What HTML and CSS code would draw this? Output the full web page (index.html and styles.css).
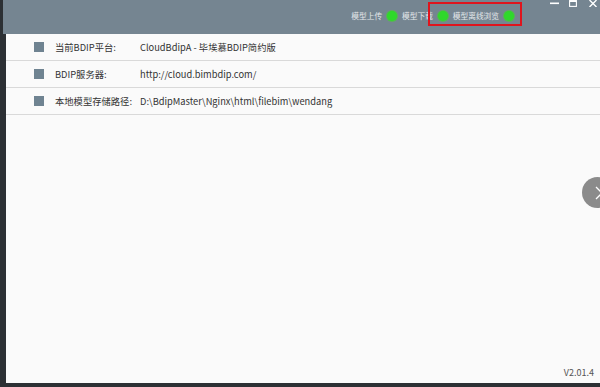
FILE: index.html
```html
<!DOCTYPE html>
<html lang="zh">
<head>
<meta charset="utf-8">
<link rel="stylesheet" href="styles.css">
</head>
<body>
<div class="app">
  <div class="strip"></div>
  <div class="main">
    <header class="topbar">
      <div class="status">
        <span class="item">模型上传<i class="dot"></i></span>
        <span class="item">模型下载<i class="dot"></i></span>
        <span class="item">模型离线浏览<i class="dot"></i></span>
        <span class="mark"></span>
      </div>
      <div class="controls">
        <svg class="min" width="9" height="7" viewBox="0 0 9 7"><rect x="0" y="2.5" width="9" height="1.6" fill="#fff"/></svg>
        <svg class="max" width="8" height="7" viewBox="0 0 8 7"><rect x="0.6" y="0.6" width="6.8" height="5.8" fill="none" stroke="#fff" stroke-width="1.1"/><rect x="0.6" y="0.6" width="6.8" height="1.4" fill="#fff"/></svg>
        <svg class="close" width="8" height="7" viewBox="0 0 8 7"><path d="M0.5 0L7.5 7M7.5 0L0.5 7" stroke="#fff" stroke-width="1.4"/></svg>
      </div>
    </header>
    <section class="content">
      <div class="row"><span class="sq"></span><span class="label">当前BDIP平台:</span><span class="value">CloudBdipA - 毕埃慕BDIP简约版</span></div>
      <div class="row"><span class="sq"></span><span class="label">BDIP服务器:</span><span class="value">http://cloud.bimbdip.com/</span></div>
      <div class="row"><span class="sq"></span><span class="label">本地模型存储路径:</span><span class="value">D:\BdipMaster\Nginx\html\filebim\wendang</span></div>
      <div class="next"><svg width="8" height="14" viewBox="0 0 8 14"><path d="M1 1L7 7L1 13" fill="none" stroke="#fff" stroke-width="1.3"/></svg></div>
      <div class="version">V2.01.4</div>
    </section>
    <div class="bottom"></div>
  </div>
</div>
</body>
</html>
```
FILE: styles.css
```css
* { box-sizing: border-box; margin: 0; padding: 0; }
html, body { width: 600px; height: 387px; overflow: hidden; }
body {
  font-family: "Noto Sans CJK SC", "Noto Sans", sans-serif;
  background: #2c3034;
}
.app { display: flex; width: 600px; height: 387px; }
.strip { width: 6px; background: #2c3034; }
.main { flex: 1; display: flex; flex-direction: column; }
.topbar {
  height: 34px;
  background: #758591;
  margin-left: -3px;
  display: flex;
  justify-content: flex-end;
  position: relative;
}
.status {
  display: flex;
  align-items: center;
  height: 31px;
  gap: 5px;
  margin-right: 86px;
  position: relative;
}
.item {
  display: flex;
  align-items: center;
  font-size: 7.7px;
  color: #e3e7ea;
  gap: 5px;
}
.dot {
  width: 10px; height: 10px;
  border-radius: 50%;
  background: #2fd82b;
  box-shadow: 0 0 0 1px #58b455;
}
.mark {
  position: absolute;
  left: 77px; top: 2px;
  width: 94px; height: 24px;
  border: 2px solid #e0141d;
}
.controls {
  position: absolute;
  left: 547px; top: 0;
  display: flex;
  align-items: flex-start;
}
.max { margin-left: 10px; }
.close { margin-left: 12px; }
.content {
  flex: 1;
  background: #fafafa;
  position: relative;
}
.row {
  height: 27px;
  border-bottom: 1px solid #d9d9d9;
  display: flex;
  align-items: center;
  font-size: 9.3px;
  color: #333;
}
.sq {
  width: 10px; height: 10px;
  background: #6f8391;
  margin-left: 28px;
  margin-right: 11px;
}
.label { width: 85px; }
.value { color: #333; }
.next {
  position: absolute;
  left: 576px; top: 143px;
  width: 31px; height: 31px;
  border-radius: 50%;
  background: #8b8b8b;
  display: flex;
  align-items: center;
  padding-left: 13px;
}
.version {
  position: absolute;
  right: 6px; bottom: 4px;
  font-size: 9px;
  color: #555;
}
.bottom { height: 4px; background: #2c3034; margin-left: -6px; }
```
